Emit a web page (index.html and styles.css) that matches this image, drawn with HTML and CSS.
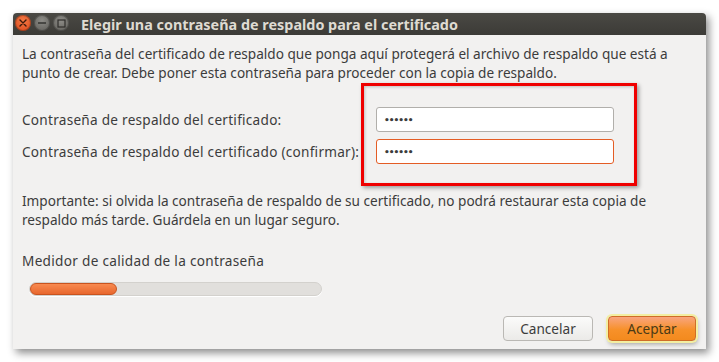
FILE: index.html
```html
<!DOCTYPE html>
<html lang="es">
<head>
    <meta charset="UTF-8">
    <meta name="viewport" content="width=device-width, initial-scale=1.0">
    <title>Elegir una contraseña para el certificado</title>
    <link rel="stylesheet" href="styles.css">
</head>
<body>
    <div class="window">
        <div class="titlebar">
            <div class="wm-buttons">
                <span class="wm-btn close">
                    <svg width="8" height="8" viewBox="0 0 8 8"><path d="M1 1 L7 7 M7 1 L1 7" stroke="#3b1a0c" stroke-width="1.4" stroke-linecap="round"/></svg>
                </span>
                <span class="wm-btn">
                    <svg width="10" height="8" viewBox="0 0 10 8"><path d="M1 4 H9" stroke="#2f2e2b" stroke-width="1.4"/></svg>
                </span>
                <span class="wm-btn">
                    <svg width="9" height="9" viewBox="0 0 9 9"><rect x="1" y="1" width="7" height="7" fill="none" stroke="#2f2e2b" stroke-width="1.2"/></svg>
                </span>
            </div>
            <span class="title">Elegir una contraseña de respaldo para el certificado</span>
        </div>

        <div class="content">
            <p class="intro">La contraseña del certificado de respaldo que ponga aquí protegerá el archivo de respaldo que está a<br>punto de crear. Debe poner esta contraseña para proceder con la copia de respaldo.</p>

            <div class="fields">
                <label for="pw1">Contraseña de respaldo del certificado:</label>
                <input type="password" id="pw1" value="123456">
                <label for="pw2">Contraseña de respaldo del certificado (confirmar):</label>
                <input type="password" id="pw2" class="focused" value="123456">
            </div>

            <p class="note">Importante: si olvida la contraseña de respaldo de su certificado, no podrá restaurar esta copia de<br>respaldo más tarde. Guárdela en un lugar seguro.</p>

            <div class="meter-label">Medidor de calidad de la contraseña</div>
            <div class="meter">
                <div class="meter-fill" style="width: 30%"></div>
            </div>

            <div class="actions">
                <button class="btn">Cancelar</button>
                <button class="btn primary">Aceptar</button>
            </div>
        </div>

        <div class="highlight"></div>
    </div>
</body>
</html>
```

FILE: styles.css
```css
html, body {
    margin: 0;
    background: #ffffff;
}
body {
    padding: 13px;
    font-family: "Noto Sans", "DejaVu Sans", sans-serif;
    font-size: 13.6px;
    color: #3c3c3c;
}
.window {
    position: relative;
    width: 693px;
    height: 336px;
    display: flex;
    flex-direction: column;
    background: #f2f1f0;
    box-shadow: 3px 4px 8px rgba(0, 0, 0, 0.45);
}
.titlebar {
    height: 22px;
    display: flex;
    align-items: center;
    background: linear-gradient(#4a4944, #3c3b37);
    border-radius: 4px 4px 0 0;
}
.wm-buttons {
    display: flex;
    gap: 3px;
    padding: 0 0 2px 2px;
    align-self: flex-start;
    margin-top: 2px;
}
.wm-btn {
    width: 16px;
    height: 16px;
    border-radius: 50%;
    display: flex;
    align-items: center;
    justify-content: center;
    background: radial-gradient(circle at 50% 35%, #8d8c87, #5c5b56);
    box-shadow: inset 0 0 0 1px rgba(0, 0, 0, 0.25);
}
.wm-btn.close {
    background: radial-gradient(circle at 50% 35%, #f47a45, #d8461a);
}
.title {
    margin-left: 12px;
    font-weight: bold;
    font-size: 14.4px;
    color: #dfdbd2;
}
.content {
    flex: 1;
    display: flex;
    flex-direction: column;
    padding: 9px 10px 8px 9px;
    line-height: 17px;
}
.intro, .note {
    margin: 0;
    line-height: 19px;
    white-space: nowrap;
}
.fields {
    display: grid;
    grid-template-columns: 354px 238px;
    row-gap: 7px;
    align-items: center;
    margin-top: 25px;
}
.fields label {
    letter-spacing: 0.26px;
    white-space: nowrap;
}
.fields input {
    height: 25px;
    box-sizing: border-box;
    border: 1px solid #b1afab;
    border-radius: 3px;
    background: #ffffff;
    padding: 0 7px;
    font-size: 9px;
    font-weight: bold;
    letter-spacing: -1px;
    color: #3c3c3c;
    font-family: "DejaVu Sans", sans-serif;
}
.fields input.focused {
    border-color: #e45d25;
}
.note {
    margin-top: 27px;
}
.meter-label {
    margin-top: 23px;
    letter-spacing: 0.3px;
}
.meter {
    margin: 13px 0 0 7px;
    width: 291px;
    height: 12px;
    border: 1px solid #d3d1cd;
    border-radius: 7px;
    background: #e1dfdc;
    box-shadow: 0 1px 0 #ffffff;
}
.meter-fill {
    height: 12px;
    box-sizing: border-box;
    border: 1px solid #c9541f;
    border-radius: 7px;
    background: linear-gradient(#f88a50, #e8672e);
}
.actions {
    margin-top: auto;
    display: flex;
    justify-content: flex-end;
    gap: 15px;
}
.btn {
    height: 25px;
    box-sizing: border-box;
    border: 1px solid #bab8b4;
    border-radius: 4px;
    background: linear-gradient(#fbfbfa, #ebeae8);
    font-family: inherit;
    font-size: 13.6px;
    color: #3c3c3c;
}
.btn:first-child {
    width: 90px;
}
.btn.primary {
    width: 88px;
    border-color: #cf6d28;
    background: linear-gradient(#f9a57f, #f7912a 55%, #f38a1e);
    color: #4a3a16;
    box-shadow: 0 0 0 2px #f3efa2, 1px 3px 5px rgba(0, 0, 0, 0.35);
}
.highlight {
    position: absolute;
    left: 348px;
    top: 70px;
    width: 270px;
    height: 97px;
    border: 3px solid #ef0000;
    box-shadow: 2px 2px 4px rgba(0, 0, 0, 0.35), inset 1px 1px 3px rgba(0, 0, 0, 0.2);
}
```
